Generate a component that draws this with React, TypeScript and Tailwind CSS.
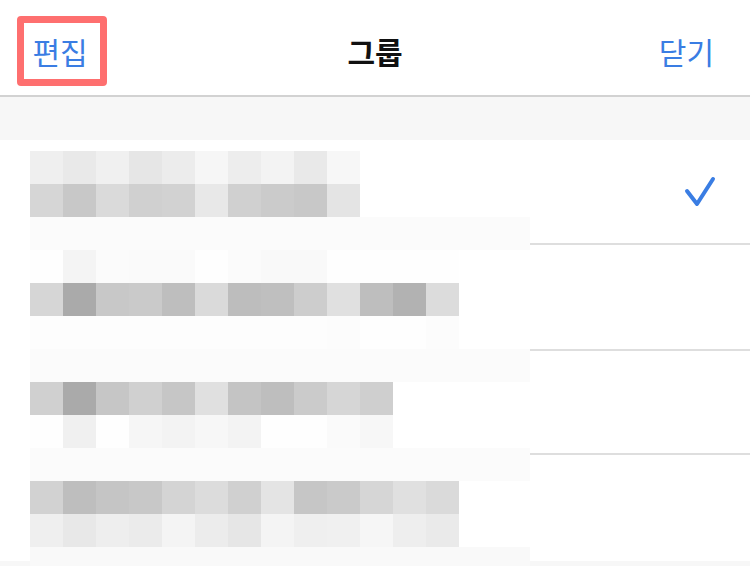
// Group picker sheet: header with edit / close, a list of groups (names redacted by a mosaic)

type MosaicRow = { cells?: string[]; bar?: string };

// redaction mosaic over the group names, one entry per 33px band
const mosaic: MosaicRow[] = [
  { cells: ['bg-[#efefef]', 'bg-[#e9e9e9]', 'bg-[#f0f0f0]', 'bg-[#e6e6e6]', 'bg-[#ececec]', 'bg-[#f6f6f6]', 'bg-[#ededed]', 'bg-[#f3f3f3]', 'bg-[#e9e9e9]', 'bg-[#f7f7f7]'] },
  { cells: ['bg-[#d6d6d6]', 'bg-[#c8c8c8]', 'bg-[#dadada]', 'bg-[#d0d0d0]', 'bg-[#d2d2d2]', 'bg-[#e8e8e8]', 'bg-[#d0d0d0]', 'bg-[#cbcbcb]', 'bg-[#c8c8c8]', 'bg-[#e4e4e4]'] },
  { bar: 'bg-[#fbfbfb]' },
  { cells: ['bg-[#fefefe]', 'bg-[#f4f4f4]', 'bg-[#fbfbfb]', 'bg-[#fafafa]', 'bg-[#fafafa]', 'bg-[#fefefe]', 'bg-[#fbfbfb]', 'bg-[#f9f9f9]', 'bg-[#f9f9f9]', 'bg-[#fefefe]', 'bg-[#fefefe]', 'bg-[#fefefe]', 'bg-[#fefefe]'] },
  { cells: ['bg-[#d6d6d6]', 'bg-[#aaaaaa]', 'bg-[#c8c8c8]', 'bg-[#cacaca]', 'bg-[#bebebe]', 'bg-[#dadada]', 'bg-[#bdbdbd]', 'bg-[#bfbfbf]', 'bg-[#cdcdcd]', 'bg-[#e0e0e0]', 'bg-[#bebebe]', 'bg-[#b2b2b2]', 'bg-[#dcdcdc]'] },
  { cells: ['bg-[#fdfdfd]', 'bg-[#fdfdfd]', 'bg-[#fdfdfd]', 'bg-[#fdfdfd]', 'bg-[#fdfdfd]', 'bg-[#fdfdfd]', 'bg-[#fdfdfd]', 'bg-[#fdfdfd]', 'bg-[#fdfdfd]', 'bg-[#fcfcfc]', 'bg-[#fefefe]', 'bg-[#fefefe]', 'bg-[#fcfcfc]'] },
  { bar: 'bg-[#fbfbfb]' },
  { cells: ['bg-[#d0d0d0]', 'bg-[#aaaaaa]', 'bg-[#c6c6c6]', 'bg-[#d0d0d0]', 'bg-[#c6c6c6]', 'bg-[#e0e0e0]', 'bg-[#c4c4c4]', 'bg-[#bebebe]', 'bg-[#cbcbcb]', 'bg-[#d6d6d6]', 'bg-[#cfcfcf]'] },
  { cells: ['bg-[#fefefe]', 'bg-[#f0f0f0]', 'bg-[#fefefe]', 'bg-[#f6f6f6]', 'bg-[#f3f3f3]', 'bg-[#f7f7f7]', 'bg-[#f3f3f3]', 'bg-[#fefefe]', 'bg-[#fefefe]', 'bg-[#fafafa]', 'bg-[#f7f7f7]'] },
  { bar: 'bg-[#fbfbfb]' },
  { cells: ['bg-[#d2d2d2]', 'bg-[#bebebe]', 'bg-[#c5c5c5]', 'bg-[#c8c8c8]', 'bg-[#d4d4d4]', 'bg-[#dcdcdc]', 'bg-[#d0d0d0]', 'bg-[#e4e4e4]', 'bg-[#c6c6c6]', 'bg-[#cacaca]', 'bg-[#d6d6d6]', 'bg-[#e0e0e0]', 'bg-[#dadada]'] },
  { cells: ['bg-[#efefef]', 'bg-[#e8e8e8]', 'bg-[#eeeeee]', 'bg-[#ebebeb]', 'bg-[#f4f4f4]', 'bg-[#ececec]', 'bg-[#e6e6e6]', 'bg-[#f4f4f4]', 'bg-[#efefef]', 'bg-[#f0f0f0]', 'bg-[#f6f6f6]', 'bg-[#eeeeee]', 'bg-[#eaeaea]'] },
  { bar: 'bg-[#f9f9f9]' },
];

const groups = [
  { height: 'h-[103px]', selected: true },
  { height: 'h-[104px]', selected: false },
  { height: 'h-[102px]', selected: false },
  { height: 'h-[106px]', selected: false },
];

function Check() {
  return (
    <svg width="32" height="32" viewBox="0 0 32 32" fill="none">
      <path
        d="M3 15 L13 28 L29 3"
        stroke="#3a7de3"
        strokeWidth="4"
        strokeLinecap="round"
        strokeLinejoin="round"
      />
    </svg>
  );
}

function Mosaic() {
  return (
    <div className="absolute top-[11px] left-[30px] flex flex-col">
      {mosaic.map((row, i) =>
        row.bar ? (
          <div key={i} className={`h-[33px] w-[500px] ${row.bar}`} />
        ) : (
          <div key={i} className="flex h-[33px]">
            {row.cells!.map((c, j) => (
              <div key={j} className={`h-[33px] w-[33px] ${c}`} />
            ))}
          </div>
        )
      )}
    </div>
  );
}

export default function App() {
  return (
    <div className="w-[750px] h-[566px] overflow-hidden bg-white font-['Noto_Sans_CJK_KR',sans-serif]">
      {/* ── HEADER ── */}
      <header className="grid grid-cols-[1fr_auto_1fr] items-center h-[97px] pt-[7px] border-b-2 border-[#d2d2d2]">
        <button className="justify-self-start ml-[17px] w-[90px] h-[70px] flex items-center justify-center pr-[4px] border-[7px] border-[#fe6f6f] rounded-[4px] text-[30px] leading-none text-[#3a7de3]">
          편집
        </button>
        <h1 className="text-[30px] leading-none font-bold text-[#111111]">그룹</h1>
        <button className="justify-self-end mr-[36px] text-[30px] leading-none text-[#3a7de3]">닫기</button>
      </header>

      <div className="h-[43px] bg-[#f7f7f7]" />

      {/* ── GROUP LIST ── */}
      <div className="relative">
        {groups.map((g, i) => (
          <div key={i}>
            <div className={`${g.height} flex items-center justify-end pr-[34px]`}>
              {g.selected && <Check />}
            </div>
            {i < groups.length - 1 && <div className="ml-[30px] h-[2px] bg-[#dedede]" />}
          </div>
        ))}
        <div className="h-[40px] bg-[#f7f7f7]" />
        <Mosaic />
      </div>
    </div>
  );
}
